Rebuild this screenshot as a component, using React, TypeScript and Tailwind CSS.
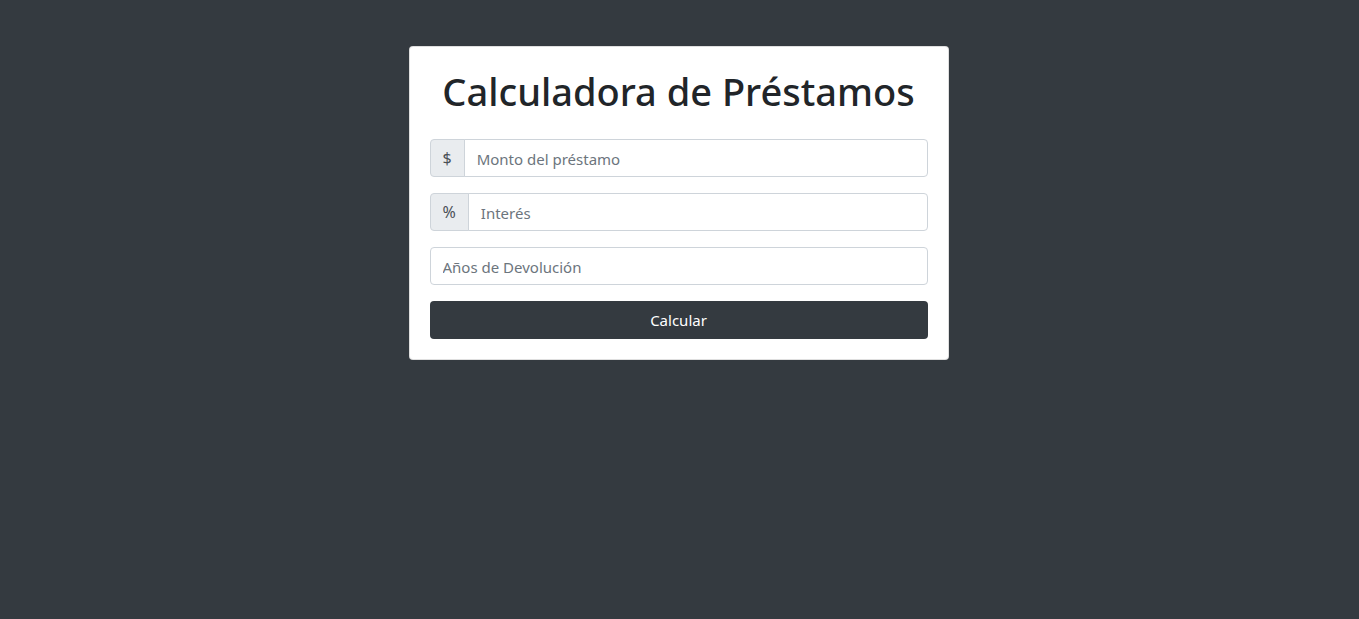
export default function App() {
  const font = { fontFamily: '"Segoe UI", "Noto Sans", "Open Sans", sans-serif' }

  return (
    <div className="min-h-screen bg-[#343a40] pt-[46px] pr-[2px] flex justify-center" style={font}>
      <div className="w-[540px] h-fit bg-white border border-black/[.125] rounded p-5">
        <h1 className="text-[38px] leading-[48px] font-medium text-[#212529] text-center mb-6">
          Calculadora de Préstamos
        </h1>

        <form className="flex flex-col gap-4" onSubmit={(e) => e.preventDefault()}>
          {/* Monto */}
          <div className="flex h-[38px]">
            <span className="flex items-center px-3 bg-[#e9ecef] border border-[#ced4da] rounded-l text-base text-[#495057]">
              $
            </span>
            <input
              type="number"
              placeholder="Monto del préstamo"
              className="flex-1 min-w-0 -ml-px px-3 pt-0.5 border border-[#ced4da] rounded-r text-[15px] text-[#495057] placeholder:text-[#6c757d] outline-none"
            />
          </div>

          {/* Interés */}
          <div className="flex h-[38px]">
            <span className="flex items-center px-3 bg-[#e9ecef] border border-[#ced4da] rounded-l text-base text-[#495057]">
              %
            </span>
            <input
              type="number"
              placeholder="Interés"
              className="flex-1 min-w-0 -ml-px px-3 pt-0.5 border border-[#ced4da] rounded-r text-[15px] text-[#495057] placeholder:text-[#6c757d] outline-none"
            />
          </div>

          {/* Años */}
          <input
            type="number"
            placeholder="Años de Devolución"
            className="h-[38px] px-3 pt-0.5 border border-[#ced4da] rounded text-[15px] text-[#495057] placeholder:text-[#6c757d] outline-none"
          />

          <button
            type="submit"
            className="h-[38px] bg-[#343a40] text-white text-[15px] rounded"
          >
            Calcular
          </button>
        </form>
      </div>
    </div>
  )
}
